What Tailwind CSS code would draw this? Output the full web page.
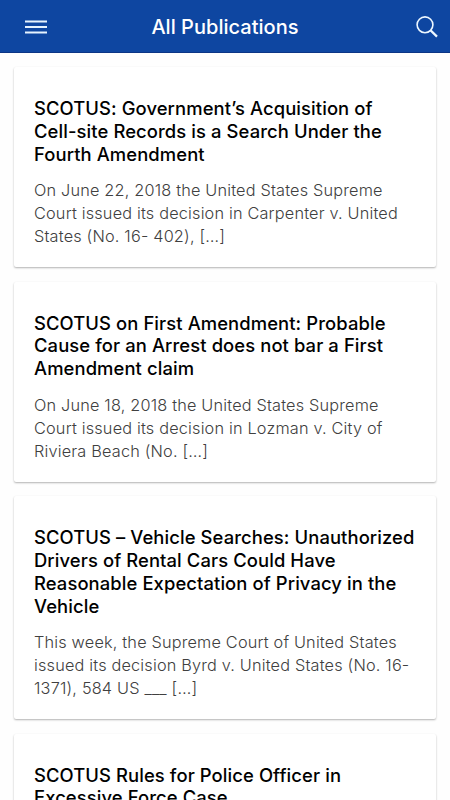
<!DOCTYPE html>
<html lang="en">
<head>
<meta charset="utf-8">
<title>All Publications</title>
<script src="https://cdn.jsdelivr.net/npm/@tailwindcss/browser@4"></script>
</head>
<body class="h-[800px] overflow-hidden bg-[#fefefe] font-['Inter','Liberation_Sans',sans-serif]">
<header class="grid h-[53px] grid-cols-[48px_1fr_48px] items-center border-b border-[#0b3585] bg-[#0e46a1] text-white">
<svg class="mt-px ml-[25px] h-[14px] w-[22px]" viewBox="0 0 22 14" fill="none" stroke="#e6f3ff" stroke-width="1.8"><path d="M0 1.5h22M0 7h22M0 12.5h22"/></svg>
<h1 class="pt-px text-center text-[20px] font-medium tracking-[0.03px]">All Publications</h1>
<svg class="mt-px ml-[14px] h-[22px] w-[22px]" viewBox="0 0 22 22" fill="none" stroke="#edf7ff"><circle cx="9" cy="8.8" r="7.9" stroke-width="1.6"/><path d="M14.6 14.4L21 20.6" stroke-width="2.2"/></svg>
</header>
<main class="flex h-[747px] flex-col gap-[14.3px] overflow-hidden px-[14px] pt-[14px] whitespace-nowrap">
<article class="h-[200.3px] shrink-0 rounded-[2px] bg-white px-5 pt-[30px] shadow-[0_1px_2px_rgba(0,0,0,0.3)]">
<h2 class="text-[18.4px] leading-[22.8px] font-medium tracking-[0.1px] text-black">SCOTUS: Government’s Acquisition of<br>Cell-site Records is a Search Under the<br>Fourth Amendment</h2>
<p class="mt-[14px] text-[16.3px] leading-[22.8px] font-light tracking-[0.18px] text-[#404040]">On June 22, 2018 the United States Supreme<br>Court issued its decision in Carpenter v. United<br>States (No. 16- 402), […]</p>
</article>
<article class="h-[200.3px] shrink-0 rounded-[2px] bg-white px-5 pt-[30px] shadow-[0_1px_2px_rgba(0,0,0,0.3)]">
<h2 class="text-[18.4px] leading-[22.8px] font-medium tracking-[0.1px] text-black">SCOTUS on First Amendment: Probable<br>Cause for an Arrest does not bar a First<br>Amendment claim</h2>
<p class="mt-[14px] text-[16.3px] leading-[22.8px] font-light tracking-[0.18px] text-[#404040]">On June 18, 2018 the United States Supreme<br>Court issued its decision in Lozman v. City of<br>Riviera Beach (No. […]</p>
</article>
<article class="h-[223.1px] shrink-0 rounded-[2px] bg-white px-5 pt-[30px] shadow-[0_1px_2px_rgba(0,0,0,0.3)]">
<h2 class="text-[18.4px] leading-[22.8px] font-medium tracking-[0.1px] text-black">SCOTUS – Vehicle Searches: Unauthorized<br>Drivers of Rental Cars Could Have<br>Reasonable Expectation of Privacy in the<br>Vehicle</h2>
<p class="mt-[14px] text-[16.3px] leading-[22.8px] font-light tracking-[0.18px] text-[#404040]">This week, the Supreme Court of United States<br>issued its decision Byrd v. United States (No. 16-<br>1371), 584 US ___ […]</p>
</article>
<article class="h-[200.3px] shrink-0 rounded-[2px] bg-white px-5 pt-[30px] shadow-[0_1px_2px_rgba(0,0,0,0.3)]">
<h2 class="text-[18.4px] leading-[22.8px] font-medium tracking-[0.1px] text-black">SCOTUS Rules for Police Officer in<br>Excessive Force Case</h2>
</article>
</main>
</body>
</html>
